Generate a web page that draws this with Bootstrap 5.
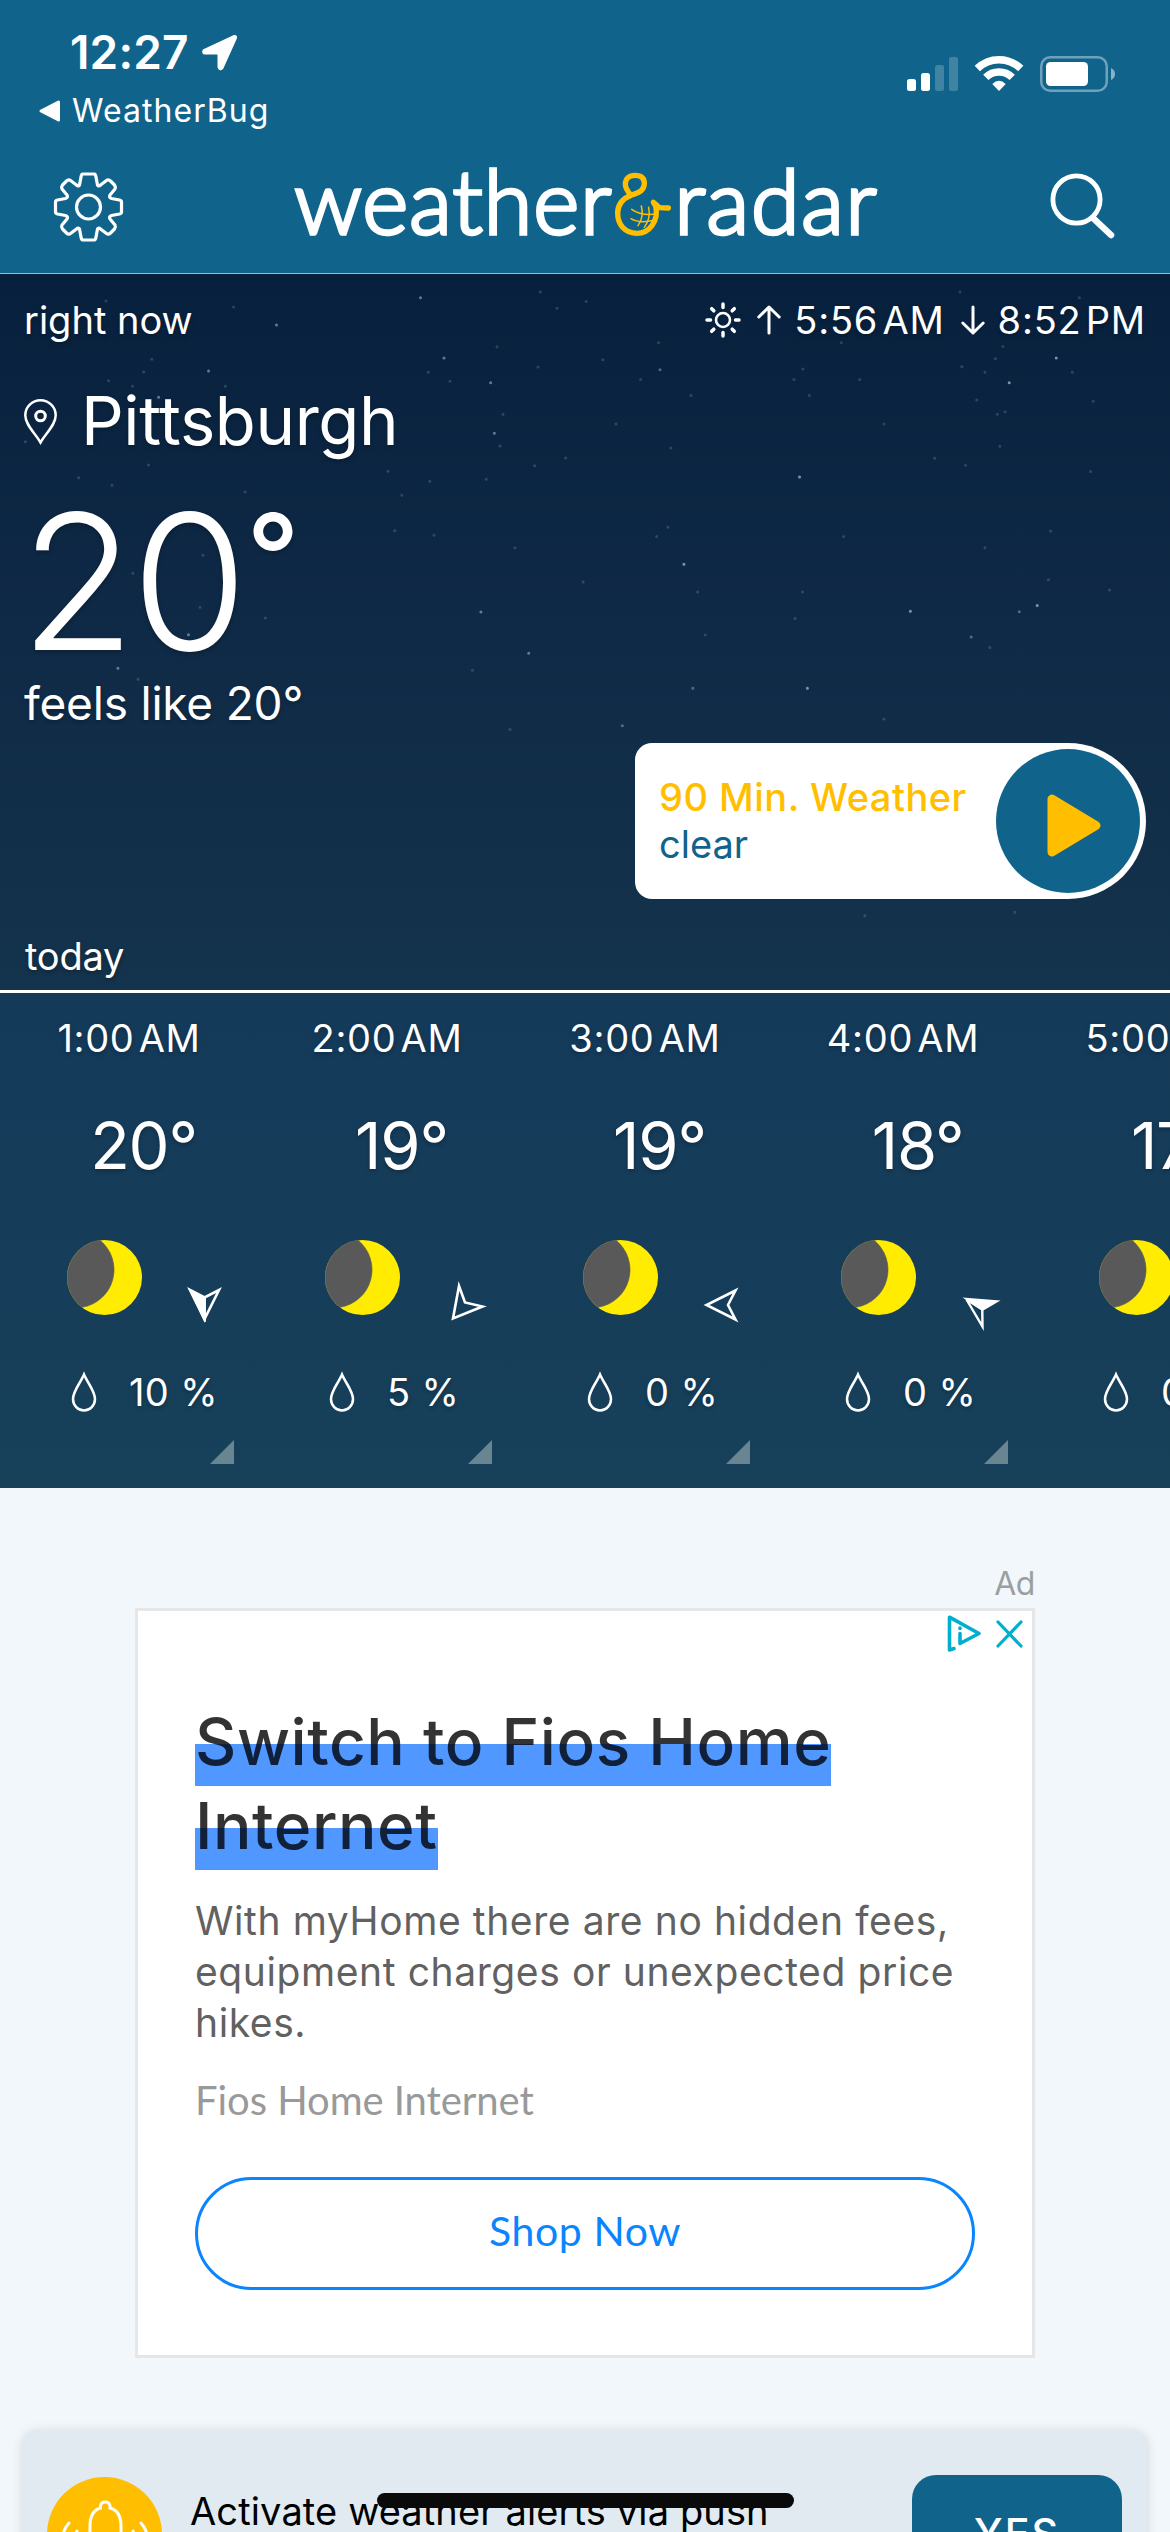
<!DOCTYPE html>
<html lang="en">
<head>
<meta charset="utf-8">
<title>Weather &amp; Radar</title>
<link href="https://cdn.jsdelivr.net/npm/bootstrap@5.3.0/dist/css/bootstrap.min.css" rel="stylesheet">
<style>
  :root { --brand: #10648c; --sun: #ffbf00; }
  body { font-family: Inter, "Liberation Sans", sans-serif; font-size: 38px; width: 1170px; height: 2532px; overflow: hidden; background: #f1f7fa; position: relative; }
  svg { display: block; flex: none; overflow: visible; }
  .app-head { background: var(--brand); height: 274px; border-bottom: 1px solid #e5b81c; }
  .status { height: 150px; }
  .clock { font-size: 46px; font-weight: 600; line-height: 52px; padding: 26px 0 0 70px; gap: 12px; letter-spacing: .14px; }
  .backlink { font-size: 32px; line-height: 40px; padding: 13px 0 0 39px; gap: 12px; letter-spacing: 1.05px; }
  .sys { padding: 55px 55px 0 0; }
  .navrow { height: 100px; padding: 0 55px 0 54px; }
  .navicon { margin-top: 14px; }
  .logo { font-family: Lato, sans-serif; font-size: 88px; font-weight: 300; line-height: 100px; -webkit-text-stroke: 3.6px #fff; stroke-linejoin: round; }
  .logo-a { width: 320px; letter-spacing: 1.1px; }
  .logo-b { margin-left: 4px; letter-spacing: 1.8px; }
  .sky { height: 719px; background: linear-gradient(#07203d, #0f2a46 50%, #14334c); border-bottom: 3px solid #fff; text-shadow: 0 2px 4px rgba(0,0,0,.25); }
  .stars { left: 0; top: 0; }
  .row-now { height: 92px; padding: 0 24px 0 24px; }
  .suntimes { letter-spacing: .8px; }
  .row-city { height: 111px; padding-left: 24px; font-size: 67px; letter-spacing: -.42px; gap: 24px; }
  .row-temp { height: 207px; padding-left: 20px; }
  .big { font-size: 188px; font-weight: 300; line-height: 209px; letter-spacing: -4px; }
  .deg { font-size: 116px; font-weight: 500; line-height: 156px; padding-bottom: 51px; margin-left: 3px; }
  .row-feels { height: 39px; line-height: 39px; font-size: 46px; padding-left: 24px; letter-spacing: -.2px; }
  .pill { width: 511px; height: 156px; margin: 20px 24px 0 auto; border-radius: 17px 78px 78px 17px; background: #fff; padding: 0 6px 0 24px; text-shadow: none; }
  .pill-t { color: var(--sun); font-weight: 500; line-height: 48px; letter-spacing: .5px; margin-top: -2px; }
  .pill-s { color: var(--brand); line-height: 46px; }
  .play { width: 144px; height: 144px; border-radius: 50%; background: var(--brand); padding-left: 51px; }
  .row-today { height: 91px; padding: 23px 0 0 25px; letter-spacing: -.2px; }
  .hours { height: 495px; background: linear-gradient(#143a59, #174059); overflow: hidden; text-shadow: 0 2px 4px rgba(0,0,0,.25); }
  .hour { width: 258px; flex: none; }
  .h-time { height: 90px; letter-spacing: .7px; }
  .h-temp { height: 126px; font-size: 65px; padding-left: 29px; letter-spacing: -1.2px; }
  .h-icon { height: 137px; padding-left: 67px; gap: 40px; }
  .h-rain { height: 92px; padding-left: 70px; letter-spacing: .4px; }
  .h-rain span { margin-left: 31px; }
  .h-more { width: 24px; height: 24px; margin: 2px 0 0 210px; background: #6a8592; clip-path: polygon(100% 0, 100% 100%, 0 100%); }
  .adwrap { width: 900px; margin: 0 auto; padding-top: 71px; }
  .adlabel { font-size: 32px; line-height: 49px; color: #9c9fa1; padding-right: 0; letter-spacing: -.4px; }
  .adbox { height: 750px; background: #fff; border: 3px solid #e6e6e6; padding: 89px 57px 0; font-family: Lato, sans-serif; }
  .adctl { right: 9px; top: 4px; gap: 15px; }
  .adtitle { font-family: Inter, sans-serif; font-size: 64px; font-weight: 500; line-height: 84px; letter-spacing: .55px; margin: 0; }
  .hl { background: linear-gradient(transparent 41px, #5097ff 41px); padding-bottom: 6px; -webkit-box-decoration-break: clone; box-decoration-break: clone; }
  .hl span { background: linear-gradient(#333 41px, #10203a 41px); -webkit-background-clip: text; background-clip: text; color: transparent; -webkit-box-decoration-break: clone; box-decoration-break: clone; }
  .adtext { font-family: Inter, sans-serif; font-size: 39px; line-height: 51px; color: #616161; margin: 27px -20px 27px 0; letter-spacing: .6px; }
  .adsrc { font-size: 40px; line-height: 51px; color: #999; letter-spacing: -.05px; }
  .adbtn { margin-top: 51px; height: 113px; border: 3px solid #0a84ff; border-radius: 57px; color: #0a84ff; font-size: 41px; letter-spacing: .6px; padding: 0 0 5px; }
  .alertcard { margin: 72px 23px 0; height: 200px; border-radius: 14px; background: #e0eaf0; box-shadow: 0 2px 12px rgba(0,0,0,.14); padding: 45px 25px 0 24px; }
  .bell { width: 115px; height: 115px; border-radius: 50%; background: var(--sun); margin-top: 2px; }
  .alert-t { margin-left: 28px; line-height: 48px; padding-top: 12px; color: #000; letter-spacing: .13px; }
  .yes { width: 210px; height: 117px; border-radius: 24px; background: var(--brand); color: #fff; font-weight: 500; font-size: 41px; letter-spacing: 2px; border: 0; }
  .homebar { left: 377px; top: 2493px; width: 417px; height: 15px; border-radius: 8px; background: #0a0a0a; }
</style>
</head>
<body>
<svg width="0" height="0" class="position-absolute">
  <symbol id="moon" viewBox="0 0 75 75"><circle cx="37.5" cy="37.5" r="37.5" fill="#ffec00"/><path d="M33 .3A38 38 0 0 1 15 67.3A37.5 37.5 0 0 1 33 .3Z" fill="#595959" stroke="#595959" stroke-width=".6"/></symbol>
  <symbol id="drop" viewBox="0 0 28 42"><path d="M14 3.5C11 11 3 20 3 28a11 11.5 0 0 0 22 0C25 20 17 11 14 3.5Z" fill="none" stroke="#fff" stroke-width="2.5"/></symbol>
</svg>

<header class="app-head text-white">
  <div class="status d-flex justify-content-between">
    <div>
      <div class="clock d-flex align-items-center"><span>12:27</span>
        <svg width="37" height="37" viewBox="0 0 37 37"><path d="M33 2.500L3 16.500Q2 19 4 19L18 19L18 33Q19 36 21 34L34.500 4Q35 2 33 2.500Z" fill="#fff" stroke="#fff" stroke-width="3" stroke-linejoin="round"/></svg>
      </div>
      <div class="backlink d-flex align-items-center">
        <svg width="21" height="22" viewBox="0 0 21 22"><path d="M19.500 2V20L2 11Z" fill="#fff" stroke="#fff" stroke-width="3" stroke-linejoin="round"/></svg>
        <span>WeatherBug</span>
      </div>
    </div>
    <div class="sys">
      <svg width="208" height="38" viewBox="907 55 208 38" fill="#fff">
        <rect x="907" y="79" width="9" height="12" rx="2.500"/><rect x="921" y="73" width="9" height="18" rx="2.500"/>
        <g opacity=".2"><rect x="935" y="65" width="9" height="26" rx="2.500"/><rect x="949" y="57" width="9" height="34" rx="2.500"/></g>
        <g fill="none" stroke="#fff" stroke-width="7.500"><path d="M977.300 68.500A31 31 0 0 1 1020.700 68.500"/><path d="M985.800 77.300A18.800 18.800 0 0 1 1012.200 77.300"/></g>
        <path d="M999 91L992.300 84Q999 77.500 1005.700 84Z"/>
        <rect x="1041.250" y="57.250" width="65.500" height="33.500" rx="9" fill="none" stroke="#fff" stroke-opacity=".4" stroke-width="2.500"/>
        <rect x="1046" y="62" width="42" height="24" rx="4.500"/><path d="M1111 68Q1115 70 1115 74T1111 80Z" opacity=".5"/>
      </svg>
    </div>
  </div>
  <div class="navrow d-flex align-items-center justify-content-between">
    <svg class="navicon" width="69" height="69" viewBox="-34.500 -34 69 69" fill="none" stroke="#fff" stroke-width="3.200" stroke-linejoin="round"><path d="M-6-33H6Q7-33 7.500-30L9-22Q10-20 12-22L18-26.500Q20-28 22-26L26-22Q27.500-20 26.500-18L21.500-12Q20-9.500 23-8.500L31-7Q33-6.500 33-5V5Q33 6.500 31 7L23 8.500Q20 9.500 21.500 12L26.500 18Q27.500 20 26 22L22 26Q20 28 18 26.500L12 22Q10 20 9 22L7.500 30Q7 33 6 33H-6Q-7 33-7.500 30L-9 22Q-10 20-12 22L-18 26.500Q-20 28-22 26L-26 22Q-27.500 20-26.500 18L-21.500 12Q-20 9.500-23 8.500L-31 7Q-33 6.500-33 5V-5Q-33-6.500-31-7L-23-8.500Q-20-9.500-21.500-12L-26.500-18Q-27.500-20-26-22L-22-26Q-20-28-18-26.500L-12-22Q-10-20-9-22L-7.500-30Q-7-33-6-33Z"/><circle r="12"/></svg>
    <div class="logo d-flex"><span class="logo-a">weather</span>
      <svg width="56" height="100" viewBox="102 0 168 300" fill="none" stroke="#ffbf00" stroke-width="16" stroke-linecap="round" stroke-linejoin="round"><path d="M262 174L236 173L217 157L224 168C234 212 205 250 168 250C130 250 110 222 110 190C110 160 128 145 150 136C178 126 190 120 190 100C190 84 180 76 162 76C144 76 133 86 133 103C133 116 140 125 150 136"/><path d="M181 168Q190 200 171 227M203 172Q210 205 190 232M152 178Q180 198 225 192M150 206Q175 222 222 210" stroke-width="4.500"/></svg>
      <span class="logo-b">radar</span></div>
    <svg class="navicon" width="65" height="66" viewBox="0 0 65 66" fill="none" stroke="#fff" stroke-linecap="round"><ellipse cx="26.500" cy="25.500" rx="23.600" ry="23.600" stroke-width="4.800"/><path d="M43.500 44.500L61 61" stroke-width="6.500"/></svg>
  </div>
</header>

<main>
<section class="sky text-white position-relative">
  <svg class="stars position-absolute" width="1170" height="716" viewBox="0 274 1170 716" fill="none" stroke="#b9cde0" stroke-width="3" stroke-linecap="round">
    <g transform="translate(0 270) scale(.3731 .3333)">
      <path opacity=".5" style="vector-effect:non-scaling-stroke" d="M741 165h.1M559 303h.1M1190 264h.1M1315 338h.1M1325 490h.1M425 382h.1M1289 1026h.1M1417 1150h.1M316 1195h.1M505 1094h.1M1127 83h.1"/>
      <path opacity=".2" style="vector-effect:non-scaling-stroke" d="M284 93h.1M626 111h.1M1493 115h.1M1448 66h.1M407 268h.1M385 306h.1M291 332h.1M355 349h.1M604 349h.1M1332 230h.1M1442 291h.1M1148 307h.1M1206 334h.1M1348 433h.1M1340 528h.1M1516 564h.1M1433 587h.1M1303 628h.1M1040 604h.1M1152 634h.1M1077 676h.1M657 666h.1M398 585h.1M211 623h.1M300 646h.1M68 515h.1M1058 782h.1M1163 796h.1M1380 833h.1M1563 936h.1M544 856h.1M356 910h.1M536 1012h.1M711 1044h.1M1266 1201h.1M370 1228h.1M1367 1379h.1"/>
    </g>
    <g transform="translate(585 270) scale(.3731 .4209)">
      <path opacity=".65" style="vector-effect:non-scaling-stroke" d="M265 699h.1M872 811h.1M596 994h.1M575 492h.1M1212 797h.1M1263 209h.1M1137 268h.1"/>
      <path opacity=".4" style="vector-effect:non-scaling-stroke" d="M201 237h.1M1164 812h.1M1035 872h.1M100 1083h.1M289 994h.1"/>
      <path opacity=".2" style="vector-effect:non-scaling-stroke" d="M3 75h.1M1325 66h.1M1005 52h.1M197 173h.1M48 213h.1M149 260h.1M284 298h.1M83 366h.1M230 423h.1M584 235h.1M560 260h.1M601 298h.1M736 260h.1M687 173h.1M801 366h.1M1010 230h.1M1072 243h.1M1100 211h.1M1120 182h.1M1306 243h.1M1362 312h.1M1050 309h.1M1105 343h.1M1126 337h.1M1112 419h.1M937 447h.1M1020 464h.1M1355 479h.1M222 611h.1M192 633h.1M693 633h.1M1072 660h.1M1248 620h.1M1242 736h.1M1406 760h.1M302 765h.1M583 765h.1M563 828h.1M1085 897h.1M801 1067h.1M322 867h.1M750 1534h.1M1152 1526h.1"/>
    </g>
  </svg>
  <div class="position-relative">
    <div class="row-now d-flex align-items-center justify-content-between">
      <span>right now</span>
      <div class="suntimes d-flex align-items-center">
        <svg width="36" height="36" viewBox="-18 -18 36 36" fill="none" stroke="#fff" stroke-width="3.500" stroke-linecap="round"><circle r="7" stroke-width="2.600"/><path d="M0-16V-12.500M0 16V12.500M-16 0H-12.500M16 0H12.500M-11.300-11.300L-9.200-9.200M11.300-11.300L9.200-9.200M-11.300 11.300L-9.200 9.200M11.300 11.300L9.200 9.200"/></svg>
        <svg class="ms-3" width="24" height="30" viewBox="0 0 24 30" fill="none" stroke="#fff" stroke-width="3" stroke-linecap="round" stroke-linejoin="round"><path d="M12 28V2M1.800 12L12 2L22.200 12"/></svg>
        <span style="margin-left:13px">5:56&#8202;AM</span>
        <svg class="ms-3" width="24" height="30" viewBox="0 0 24 30" fill="none" stroke="#fff" stroke-width="3" stroke-linecap="round" stroke-linejoin="round"><path d="M12 2V28M1.800 18L12 28L22.200 18"/></svg>
        <span style="margin-left:13px">8:52&#8202;PM</span>
      </div>
    </div>
    <div class="row-city d-flex align-items-center">
      <svg width="33" height="45" viewBox="0 0 33 45" fill="none" stroke="#fff" stroke-width="2.500"><path d="M16.500 43.500C11 34 1.300 26 1.300 16.300a15.200 15 0 0 1 30.400 0C31.700 26 22 34 16.500 43.500Z"/><circle cx="16.500" cy="17" r="4.800" stroke-width="3"/></svg>
      <span>Pittsburgh</span>
    </div>
    <div class="row-temp d-flex"><span class="big">20</span><span class="deg">°</span></div>
    <div class="row-feels">feels like 20°</div>
    <div class="pill d-flex align-items-center justify-content-between">
      <div><div class="pill-t">90 Min. Weather</div><div class="pill-s">clear</div></div>
      <div class="play d-flex align-items-center"><svg width="54" height="63" viewBox="0 0 54 63" style="margin-top:8px"><path d="M5 5V58L49 31.500Z" fill="#ffbf00" stroke="#ffbf00" stroke-width="9" stroke-linejoin="round"/></svg></div>
    </div>
    <div class="row-today d-flex align-items-center">today</div>
  </div>
</section>

<section class="hours d-flex text-white">
  <div class="hour">
    <div class="h-time d-flex align-items-center justify-content-center">1:00&#8202;AM</div>
    <div class="h-temp d-flex align-items-center justify-content-center">20°</div>
    <div class="h-icon d-flex align-items-center"><svg width="75" height="75"><use href="#moon"/></svg>
      <svg width="45" height="45" viewBox="-22.500 -50 45 45"><path d="M-14.500-15L0-7.500L14.500-15L0 14Z" fill="none" stroke="#fff" stroke-width="2.600"/><path d="M-16-16.500L1.500-8V16.500L0 17.500Z" fill="#fff"/></svg></div>
    <div class="h-rain d-flex align-items-center"><svg width="28" height="42"><use href="#drop"/></svg><span>10 %</span></div>
    <div class="h-more"></div>
  </div>
  <div class="hour">
    <div class="h-time d-flex align-items-center justify-content-center">2:00&#8202;AM</div>
    <div class="h-temp d-flex align-items-center justify-content-center">19°</div>
    <div class="h-icon d-flex align-items-center"><svg width="75" height="75"><use href="#moon"/></svg>
      <svg width="45" height="45" viewBox="-26.500 -50 45 45"><path d="M-7.500-19L-13.500 13.500L16 1.500L-1.500-2.500Z" fill="none" stroke="#fff" stroke-width="2.600"/></svg></div>
    <div class="h-rain d-flex align-items-center"><svg width="28" height="42"><use href="#drop"/></svg><span>5 %</span></div>
    <div class="h-more"></div>
  </div>
  <div class="hour">
    <div class="h-time d-flex align-items-center justify-content-center">3:00&#8202;AM</div>
    <div class="h-temp d-flex align-items-center justify-content-center">19°</div>
    <div class="h-icon d-flex align-items-center"><svg width="75" height="75"><use href="#moon"/></svg>
      <svg width="45" height="45" viewBox="-22.500 -50 45 45"><path d="M15-14.500L-14 0L15 14.500L7.500 0Z" fill="none" stroke="#fff" stroke-width="2.600"/></svg></div>
    <div class="h-rain d-flex align-items-center"><svg width="28" height="42"><use href="#drop"/></svg><span>0 %</span></div>
    <div class="h-more"></div>
  </div>
  <div class="hour">
    <div class="h-time d-flex align-items-center justify-content-center">4:00&#8202;AM</div>
    <div class="h-temp d-flex align-items-center justify-content-center">18°</div>
    <div class="h-icon d-flex align-items-center"><svg width="75" height="75"><use href="#moon"/></svg>
      <svg width="45" height="45" viewBox="-24.500 -51.500 45 45"><path d="M-14-7L2 20L1.800 3Z" fill="none" stroke="#fff" stroke-width="2.400"/><path d="M-18-9L20-6L2 4.500Z" fill="#fff"/></svg></div>
    <div class="h-rain d-flex align-items-center"><svg width="28" height="42"><use href="#drop"/></svg><span>0 %</span></div>
    <div class="h-more"></div>
  </div>
  <div class="hour">
    <div class="h-time d-flex align-items-center justify-content-center">5:00&#8202;AM</div>
    <div class="h-temp d-flex align-items-center justify-content-center">17°</div>
    <div class="h-icon d-flex align-items-center"><svg width="75" height="75"><use href="#moon"/></svg></div>
    <div class="h-rain d-flex align-items-center"><svg width="28" height="42"><use href="#drop"/></svg><span>0 %</span></div>
  </div>
</section>

<section class="adwrap">
  <div class="adlabel text-end">Ad</div>
  <div class="adbox position-relative">
    <div class="adctl position-absolute d-flex align-items-center">
      <svg width="34" height="37" viewBox="0 0 34 37" fill="none" stroke="#00aecd" stroke-width="3.600" stroke-linejoin="round" stroke-linecap="round"><path d="M7 33.500L2.500 35V2.200L32 18.500L13 28.500V18.500"/><path d="M13 13V13.500"/></svg>
      <svg width="27" height="28" viewBox="0 0 27 28" stroke="#00aecd" stroke-width="3.200" stroke-linecap="round"><path d="M2 2L25 26M25 2L2 26"/></svg>
    </div>
    <h2 class="adtitle"><span class="hl"><span>Switch to Fios Home<br>Internet</span></span></h2>
    <p class="adtext">With myHome there are no hidden fees,<br>equipment charges or unexpected price<br>hikes.</p>
    <div class="adsrc">Fios Home Internet</div>
    <button class="adbtn btn w-100">Shop Now</button>
  </div>
</section>

<section class="alertcard d-flex align-items-start">
  <div class="bell"><svg width="115" height="115" viewBox="47 2477 115 115" fill="none" stroke="#fff" stroke-width="3" stroke-linecap="round"><path d="M90 2550V2526Q90 2511 100.500 2508V2506A4.800 4.800 0 0 1 110 2506V2508Q121 2511 121 2526V2550M69 2523Q59 2534 63 2556M141 2523Q151 2534 147 2556M77 2531Q73 2540 76 2550M133 2531Q137 2540 134 2550"/></svg></div>
  <div class="alert-t">Activate weather alerts via push</div>
  <button class="yes btn ms-auto">YES</button>
</section>
</main>
<div class="homebar position-absolute"></div>
<script src="https://cdn.jsdelivr.net/npm/bootstrap@5.3.0/dist/js/bootstrap.bundle.min.js"></script>
</body>
</html>
